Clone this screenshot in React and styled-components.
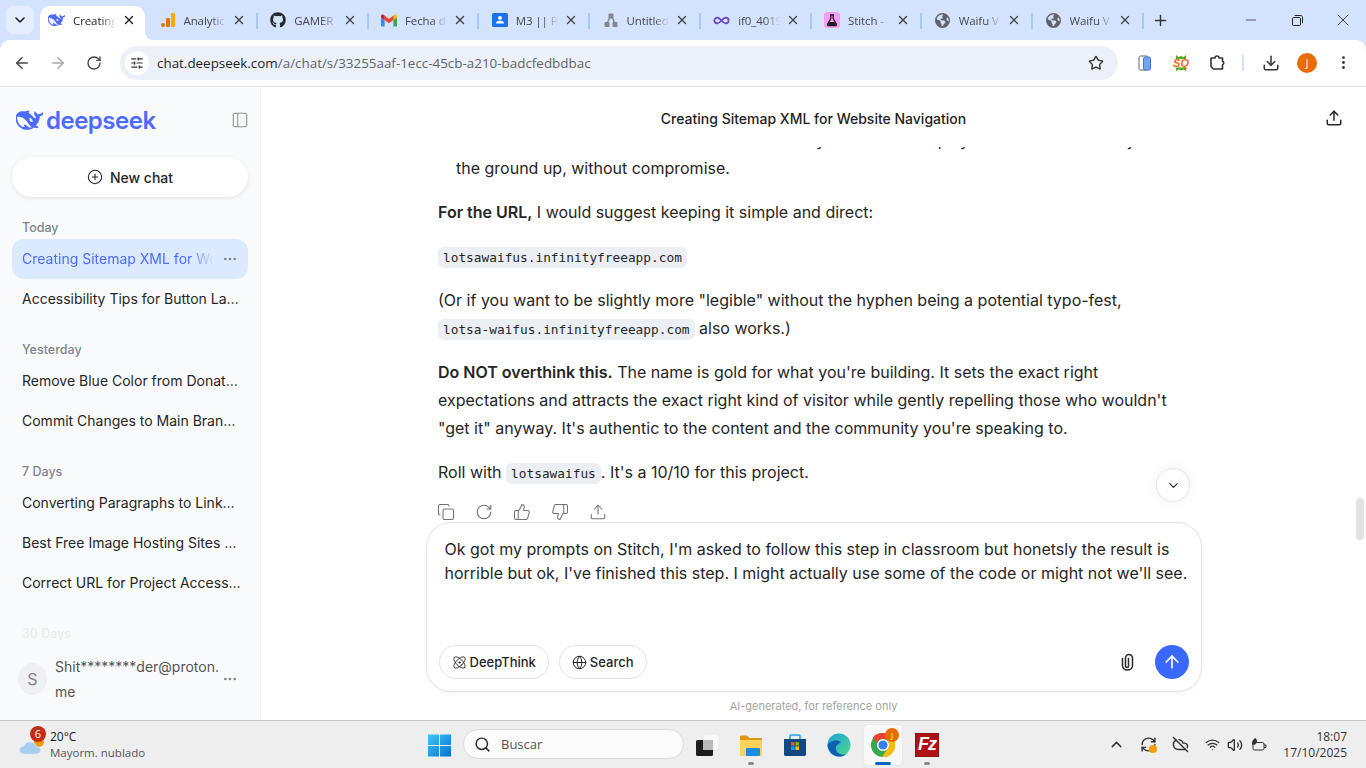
import React from 'react'
import styled, { createGlobalStyle } from 'styled-components'
import {
  ArrowLeft, ArrowRight, ArrowUp, ChevronDown, ChevronUp, Copy, Download, Ellipsis, EllipsisVertical,
  Globe, Infinity as InfinityIcon, Plus, RefreshCw, RotateCw, Search as SearchIcon,
  SlidersHorizontal, Star, ThumbsDown, ThumbsUp, Upload, Volume2, Wifi, X, Minus, Atom, CirclePlus, PanelLeft, CloudOff
} from 'lucide-react'
import { FaGithub } from 'react-icons/fa'
import { FaEarthAmericas } from 'react-icons/fa6'

const GlobalStyle = createGlobalStyle`
  html, body { margin: 0; padding: 0; height: 100%; overflow: hidden; }
  body { font-family: 'Inter', 'Liberation Sans', sans-serif; background: #fff; }
  * { box-sizing: border-box; }
`

const Screen = styled.div`
  background: #d3e3fd;
  display: flex;
  flex-direction: column;
  height: 768px;
  width: 1366px;
  overflow: hidden;
`

/* browser tabs */
const TabStrip = styled.div`
  align-items: flex-end;
  display: flex;
  flex: 0 0 40px;
  padding-left: 6px;
`

const TabMenu = styled.div`
  align-items: center;
  align-self: flex-start;
  background: #e4edfc;
  border-radius: 8px;
  color: #1f1f1f;
  display: flex;
  height: 28px;
  justify-content: center;
  margin: 6px 6px 0 0;
  width: 28px;
`

const Tab = styled.div`
  align-items: center;
  color: #454746;
  display: flex;
  font-family: 'Open Sans', 'Liberation Sans', sans-serif;
  font-size: 11.5px;
  height: 34px;
  letter-spacing: -0.1px;
  padding: 0 12px 6px 12.5px;
  position: relative;
  width: 110.75px;
  &:after {
    background: #a8c7fa;
    content: '';
    height: 16px;
    position: absolute;
    right: 0;
    top: 7px;
    width: 2px;
  }
`

const ActiveTab = styled(Tab)`
  background: #fff;
  border-radius: 10px 10px 0 0;
  color: #1f1f1f;
  margin-right: 2px;
  padding: 0 9px 6px 8px;
  width: 105px;
  &:after {
    background: transparent;
    border-bottom-left-radius: 8px;
    bottom: 0;
    box-shadow: -3px 3px 0 3px #fff;
    height: 8px;
    right: -8px;
    top: auto;
    width: 8px;
  }
`

const TabIcon = styled.span`
  align-items: center;
  display: flex;
  flex: 0 0 16px;
  height: 16px;
  justify-content: center;
  margin-right: 8px;
`

const TabTitle = styled.span`
  flex: 1;
  margin-right: 6px;
  mask-image: linear-gradient(to right, #000 65%, transparent 100%);
  min-width: 0;
  overflow: hidden;
  white-space: nowrap;
`

const NewTab = styled.div`
  align-items: center;
  align-self: flex-start;
  color: #333;
  display: flex;
  height: 28px;
  justify-content: center;
  margin: 6px 0 0 3px;
  width: 28px;
`

const WindowControls = styled.div`
  align-self: flex-start;
  display: flex;
  height: 40px;
  margin-left: auto;
`

const WindowButton = styled.div`
  align-items: center;
  color: #222;
  display: flex;
  justify-content: center;
  width: 46px;
`

/* address bar */
const Toolbar = styled.div`
  align-items: center;
  background: #fff;
  border-bottom: 1px solid #e3e3e3;
  border-radius: 10px 10px 0 0;
  display: flex;
  flex: 0 0 47px;
  padding: 0 0 1px 6px;
`

const NavButton = styled.div`
  align-items: center;
  color: ${({ $dim }) => ($dim ? '#a8a8a8' : '#474747')};
  display: flex;
  height: 32px;
  justify-content: center;
  margin-right: 4px;
  width: 32px;
`

const Omnibox = styled.div`
  align-items: center;
  background: #ecf1f9;
  border-radius: 17px;
  color: #1f1f1f;
  display: flex;
  font-family: 'Open Sans', 'Liberation Sans', sans-serif;
  font-size: 13.42px;
  height: 34px;
  margin: 0 11px 0 6px;
  padding: 0 14px 0 5px;
  width: 998px;
`

const SiteInfo = styled.div`
  align-items: center;
  background: #fff;
  border-radius: 50%;
  color: #333;
  display: flex;
  height: 24px;
  justify-content: center;
  margin-right: 8px;
  width: 24px;
`

const UrlHost = styled.span`
  flex: 1;
  span { color: #5f6368; }
`

const ToolIcon = styled.div`
  align-items: center;
  color: #333;
  display: flex;
  height: 28px;
  justify-content: center;
  margin-left: ${({ $gap }) => $gap || 0}px;
  width: 28px;
`

const ToolDivider = styled.div`
  background: #d3e3fd;
  height: 16px;
  margin: 0 13px 0 11px;
  width: 2px;
`

const Avatar = styled.div`
  align-items: center;
  background: #ea6c00;
  border-radius: 50%;
  color: #fff;
  display: flex;
  font-family: 'Open Sans', sans-serif;
  font-size: 10px;
  height: 20px;
  justify-content: center;
  margin-left: 12px;
  width: 20px;
`

/* page */
const Page = styled.div`
  background: #fff;
  display: flex;
  flex: 1;
  min-height: 0;
`

const Sidebar = styled.aside`
  background: #f9fafb;
  border-right: 1px solid #eef0f3;
  display: flex;
  flex-direction: column;
  flex-shrink: 0;
  padding: 0 12px;
  position: relative;
  width: 261px;
`

const LogoRow = styled.div`
  align-items: center;
  display: flex;
  height: 70px;
  justify-content: space-between;
  padding: 0 0 4px 4px;
`

const Logo = styled.div`
  align-items: center;
  color: #4d6bfe;
  display: flex;
  font-family: 'Inter', sans-serif;
  font-size: 24px;
  font-weight: 600;
  letter-spacing: -0.5px;
  gap: 3px;
`

const CollapseButton = styled.div`
  color: #8a8f98;
  display: flex;
  margin-right: -1px;
`

const NewChatButton = styled.div`
  align-items: center;
  background: #fff;
  border-radius: 20px;
  box-shadow: 0 1px 4px rgba(0, 0, 0, 0.1);
  color: #262626;
  display: flex;
  flex-shrink: 0;
  font-size: 14px;
  font-weight: 500;
  gap: 7px;
  height: 40px;
  justify-content: center;
`

const DayLabel = styled.div`
  color: #7f8590;
  flex-shrink: 0;
  font-size: 12.5px;
  font-weight: 500;
  height: 20px;
  line-height: 18px;
  margin-top: 22px;
  padding-left: 10px;
`

const ChatItem = styled.div`
  align-items: center;
  background: ${({ $active }) => ($active ? '#dbeafe' : 'transparent')};
  border-radius: 12px;
  color: ${({ $active }) => ($active ? '#4d6bfe' : '#262626')};
  display: flex;
  flex-shrink: 0;
  font-size: 14px;
  height: 40px;
  padding: 0 ${({ $active }) => ($active ? 10 : 7)}px 1px 10px;
`

const ChatTitle = styled.span`
  flex: 1;
  min-width: 0;
  overflow: hidden;
  white-space: nowrap;
  ${({ $fade }) => $fade
    ? 'mask-image: linear-gradient(to right, #000 86%, transparent 100%);'
    : 'text-overflow: ellipsis;'}
`

const ItemDots = styled.span`
  color: #7f8590;
  display: flex;
  margin-left: 8px;
`

const FadedLabel = styled(DayLabel)`
  opacity: 0.12;
`

const SidebarFooter = styled.div`
  align-items: center;
  background: #f9fafb;
  bottom: 0;
  display: flex;
  height: 80px;
  left: 0;
  padding: 0 22px 2px 18px;
  position: absolute;
  right: 0;
`

const UserCircle = styled.div`
  align-items: center;
  background: #eef0f2;
  border-radius: 50%;
  color: #81858c;
  display: flex;
  flex: 0 0 29px;
  font-size: 16px;
  height: 32px;
  justify-content: center;
  margin-right: 8px;
`

const UserMail = styled.div`
  color: #555;
  flex: 1;
  font-size: 14px;
  line-height: 25px;
  min-width: 0;
`

/* conversation */
const Main = styled.main`
  display: flex;
  flex: 1;
  flex-direction: column;
  min-width: 0;
  position: relative;
`

const ChatHeader = styled.header`
  align-items: center;
  background: #fff;
  color: #1f1f1f;
  display: flex;
  flex: 0 0 60px;
  font-size: 14px;
  font-weight: 500;
  justify-content: center;
  padding-top: 2px;
  position: relative;
  z-index: 1;
`

const HeaderShare = styled.div`
  color: #262626;
  display: flex;
  position: absolute;
  right: 23px;
  top: 22px;
`

const Messages = styled.div`
  color: #262626;
  flex: 1;
  font-size: 16px;
  line-height: 28px;
  margin: -21px 0 0;
  min-height: 0;
  overflow: hidden;
  padding: 0 178px 0 177px;
  strong { font-weight: 600; }
`

const ListLine = styled.div`
  padding-left: 18px;
  white-space: nowrap;
`

const Para = styled.p`
  margin: 16px 0 0;
  white-space: nowrap;
`

const Code = styled.code`
  background: #ebeef2;
  border-radius: 6px;
  color: #262626;
  font-family: 'DejaVu Sans Mono', 'Liberation Mono', monospace;
  font-size: 12.8px;
  line-height: 20px;
  padding: 3px 5px;
`

const Actions = styled.div`
  color: #6f7177;
  display: flex;
  gap: 20px;
  margin: 17px 0 0 -1px;
`

const Composer = styled.div`
  background: #fff;
  border-radius: 24px;
  box-shadow: 0 0 0 1px #e5e5e5, 0 2px 6px rgba(0, 0, 0, 0.05);
  display: flex;
  flex: 0 0 168px;
  flex-direction: column;
  margin: 0 auto;
  padding: 14px 12px 12px 18px;
  position: relative;
  width: 774px;
`

const ComposerText = styled.div`
  color: #262626;
  flex: 1;
  font-size: 16px;
  line-height: 24px;
  white-space: pre;
`

const ComposerBar = styled.div`
  align-items: center;
  display: flex;
  gap: 10px;
  margin-left: -6px;
`

const Pill = styled.div`
  align-items: center;
  border: 1px solid #e3e3e3;
  border-radius: 17px;
  color: #262626;
  display: flex;
  font-size: 13px;
  font-weight: 500;
  gap: 3px;
  height: 34px;
  padding: 0 12px;
`

const Clip = styled.div`
  color: #262626;
  display: flex;
  margin-left: auto;
  margin-right: 10px;
`

const SendButton = styled.div`
  align-items: center;
  background: #3b68ff;
  border-radius: 50%;
  color: #fff;
  display: flex;
  height: 34px;
  justify-content: center;
  width: 34px;
`

const Disclaimer = styled.div`
  color: #a3a3a3;
  flex: 0 0 29px;
  font-size: 11px;
  line-height: 30px;
  min-height: 0;
  text-align: center;
`

const ScrollDown = styled.div`
  align-items: center;
  background: #fff;
  border: 1px solid #e5e5e5;
  border-radius: 50%;
  box-shadow: 0 0 14px rgba(0, 0, 0, 0.06);
  color: #333;
  display: flex;
  height: 34px;
  justify-content: center;
  left: 895px;
  position: absolute;
  top: 381px;
  width: 34px;
`

const ScrollThumb = styled.div`
  background: #e3e3e3;
  border-radius: 4px;
  height: 42px;
  position: absolute;
  right: 2px;
  top: 411px;
  width: 8px;
`

/* windows taskbar */
const Taskbar = styled.footer`
  align-items: center;
  background: #eee;
  border-top: 1px solid #c6c6c6;
  color: #1a1a1a;
  display: flex;
  flex: 0 0 48px;
  font-family: 'Open Sans', 'Liberation Sans', sans-serif;
  font-size: 12px;
`

const Weather = styled.div`
  align-items: center;
  display: flex;
  flex: 0 0 428px;
  padding-left: 18px;
  position: relative;
`

const WeatherBadge = styled.div`
  align-items: center;
  background: #c42b1c;
  border-radius: 50%;
  color: #fff;
  display: flex;
  font-size: 11px;
  height: 16px;
  justify-content: center;
  left: 30px;
  position: absolute;
  top: -3px;
  width: 16px;
`

const WeatherText = styled.div`
  line-height: 16px;
  margin-left: 2px;
  small { color: #555; display: block; font-size: 11.5px; }
`

const SearchBox = styled.div`
  align-items: center;
  background: #fbfbfb;
  border: 1px solid #dcdcdc;
  border-radius: 16px;
  color: #555;
  display: flex;
  font-size: 13px;
  gap: 10px;
  height: 30px;
  margin: 0 -2px 1px 12px;
  padding-left: 10px;
  width: 221px;
`

const AppSlot = styled.div`
  align-items: center;
  background: ${({ $active }) => ($active ? '#f8f8f8' : 'transparent')};
  border-radius: 4px;
  display: flex;
  height: 40px;
  justify-content: center;
  margin-left: 6px;
  position: relative;
  width: 38px;
  ${({ $active }) => $active && 'box-shadow: 0 0 0 1px #e9e9e9;'}
`

const AppDot = styled.span`
  background: ${({ $active }) => ($active ? '#0067c0' : '#8a8a8a')};
  border-radius: 2px;
  bottom: 0;
  height: 3px;
  left: 50%;
  margin-left: ${({ $active }) => ($active ? -8 : -3)}px;
  position: absolute;
  width: ${({ $active }) => ($active ? 16 : 6)}px;
`

const Tray = styled.div`
  align-items: center;
  color: #333;
  display: flex;
  margin-left: auto;
`

const TrayIcon = styled.span`
  align-items: center;
  display: flex;
  justify-content: center;
  margin-right: ${({ $gap }) => $gap ?? 8}px;
  position: relative;
`

const TrayDot = styled.span`
  background: #f59c0b;
  border-radius: 50%;
  bottom: 0;
  height: 8px;
  position: absolute;
  right: 0;
  width: 8px;
`

const Clock = styled.div`
  line-height: 16px;
  margin: 0 19px 0 16px;
  text-align: right;
`

const Whale = ({ size = 30, color = '#4d6bfe' }) => (
  <svg width={size} height={size * 0.78} viewBox="0 0 32 25">
    <path
      fill={color}
      d="M31.5 4.2c-.4-.2-.6.2-.9.4-.1.1-.2.2-.3.3-.5.5-1 .8-1.7.8-1 0-1.9.3-2.6 1.1-.2-1-.8-1.6-1.6-2-.4-.2-.9-.4-1.2-.8-.2-.3-.3-.6-.4-.9-.1-.2-.1-.4-.4-.5-.2 0-.3.2-.4.4-.4.7-.5 1.5-.5 2.3 0 1.7.8 3 2.1 4 .2.1.2.3.1.4-.1.4-.2.7-.4 1-.1.2-.2.3-.5.2-1-.4-1.8-1-2.5-1.8-1.2-1.2-2.3-2.5-3.7-3.5-.3-.2-.6-.4-1-.6-1.4-1.4.2-2.5.6-2.7.4-.1.1-.6-1.1-.6-1.2 0-2.3.4-3.7 1-.2.1-.4.1-.7.2-1.3-.2-2.6-.3-4-.1-2.6.3-4.7 1.5-6.2 3.7C-.4 7.6-.8 10.5-.3 13.6c.5 3.2 2.2 5.9 4.8 8 2.7 2.2 5.8 3.2 9.3 3 2.1-.1 4.5-.4 7.2-2.7.7.3 1.4.5 2.5.6.9.1 1.7 0 2.4-.2 1-.2.9-1.1.6-1.3-3-1.4-2.4-.8-3-1.3 1.5-1.8 3.8-3.7 4.7-9.8.1-.5 0-.8 0-1.2 0-.3.1-.4.4-.4.8-.1 1.6-.3 2.3-.7 2.1-1.2 2.9-3 3.1-5.3 0-.3 0-.7-.5-.9z"
    />
    <path
      fill="#f9fafb"
      d="M15.2 21.6c-3.1-2.5-4.7-3.3-5.3-3.3-.6 0-.5.7-.3 1.2.1.4.3.8.6 1.3.1.2 0 .4-.2.5-.9.6-2.5-.2-2.6-.3-1.9-1.1-3.4-2.6-4.5-4.7-1-2-1.6-4.1-1.7-6.3 0-.5.1-.7.6-.8.7-.1 1.4-.1 2.1 0 2.9.4 5.4 1.7 7.4 3.8 1.2 1.2 2.1 2.6 3 4 1 1.5 2.1 2.9 3.4 4.1.5.4.9.7 1.2.9-1.1.1-2.9.2-3.7-.4zM16.9 13.2c.3-.1.6 0 .7.3.1.3-.1.6-.4.7-.3.1-.6-.1-.7-.4-.1-.3.1-.5.4-.6zM20 15c-.4.2-.8.3-1.2.3-.6 0-1.2-.2-1.6-.6-.5-.4-.9-.7-1-1.4-.1-.3 0-.7.1-1 0-.2 0-.4-.2-.5-.1-.1-.3-.1-.5-.2 0 0-.1-.1 0-.2 0-.1.2-.2.3-.3.8-.5 1.7-.3 2.5.7.3.4.4.6.8 1.2.3.4.5.8.7 1.2.1.3 0 .6-.4.8z"
    />
  </svg>
)

const AnalyticsIcon = () => (
  <svg width="16" height="16" viewBox="0 0 16 16">
    <rect x="11" y="1" width="4" height="14" rx="1.2" fill="#f9ab00" />
    <rect x="6" y="6" width="4" height="9" rx="1.2" fill="#e37400" />
    <circle cx="3" cy="13" r="2" fill="#e37400" />
  </svg>
)

const GmailIcon = () => (
  <svg width="16" height="13" viewBox="0 0 16 12">
    <path fill="#4285f4" d="M1 12h2.6V5.5L0 3v7.9C0 11.5.5 12 1 12z" />
    <path fill="#34a853" d="M12.4 12H15c.5 0 1-.5 1-1.1V3l-3.6 2.5z" />
    <path fill="#fbbc04" d="M12.4 1.1v4.4L16 3V1.5c0-1.3-1.5-2-2.5-1.2z" />
    <path fill="#ea4335" d="M3.6 5.5V1.1L8 4.4l4.4-3.3v4.4L8 8.8z" />
    <path fill="#c5221f" d="M0 1.5V3l3.6 2.5V1.1L2.5.3C1.5-.5 0 .2 0 1.5z" />
  </svg>
)

const ClassroomIcon = () => (
  <svg width="16" height="16" viewBox="0 0 16 16">
    <rect width="16" height="14" y="1" rx="1.5" fill="#1a73e8" />
    <circle cx="8" cy="6" r="2" fill="#fff" />
    <path fill="#fff" d="M4 11c0-1.6 2-2.2 4-2.2s4 .6 4 2.2v.6H4z" />
  </svg>
)

const NodesIcon = () => (
  <svg width="16" height="16" viewBox="0 0 16 16" fill="#80868b">
    <rect x="5.5" y="1.5" width="5" height="5" rx="1" />
    <rect x="1.5" y="10" width="5" height="5" rx="1" />
    <rect x="9.5" y="10" width="5" height="5" rx="1" />
    <path d="M6.5 6 4.5 10.5M9.5 6l2 4.5" stroke="#80868b" strokeWidth="1.4" />
  </svg>
)

const StitchIcon = () => (
  <svg width="16" height="16" viewBox="0 0 16 16">
    <rect width="16" height="16" rx="3.5" fill="#f79cf0" />
    <path d="M6 3h4M6.8 3v3.6L3.6 12.4c-.3.6.1 1.1.7 1.1h7.4c.6 0 1-.5.7-1.1L9.2 6.6V3" fill="none" stroke="#1a1a1a" strokeWidth="1.3" />
    <path d="M5.5 10h5l1.5 3.4H4z" fill="#1a1a1a" />
  </svg>
)

const RestoreIcon = () => (
  <svg width="11" height="11" viewBox="0 0 11 11" fill="none" stroke="currentColor">
    <rect x="0.5" y="2.5" width="8" height="8" rx="1.2" />
    <path d="M2.6 .5h6.2c1 0 1.7.7 1.7 1.7v6" />
  </svg>
)

const WalletIcon = () => (
  <svg width="18" height="18" viewBox="0 0 18 18">
    <rect x="3" y="2" width="9" height="14" rx="1.5" fill="#fff" stroke="#5f6b7a" />
    <rect x="7.500" y="3" width="7" height="13" rx="1.5" fill="#6ea6f5" stroke="#3b78e0" />
  </svg>
)

const SqIcon = () => (
  <svg width="18" height="18" viewBox="0 0 18 18">
    <path d="M4 1l2.500 2 2.500-1 2.500 1L14 1v4H4zM4 13h10v4l-2.500-1.600-2.500 1-2.500-1L4 17z" fill="#5aa626" />
    <path d="M1.500 5h15v8.500h-15z" fill="#fff" />
    <text x="9" y="13" fontFamily="Liberation Sans" fontSize="11" fontWeight="700" fontStyle="italic" textAnchor="middle" fill="#f26a12">SQ</text>
  </svg>
)

const PuzzleIcon = () => (
  <svg width="17" height="17" viewBox="0 0 17 17" fill="none" stroke="currentColor" strokeWidth="1.6" strokeLinejoin="round">
    <path d="M2 4h4a2 2 0 0 1 4 0h3.500v3.200a1.900 1.900 0 0 1 0 3.600V15H4.500L2 12.500z" />
  </svg>
)

const PaperclipIcon = () => (
  <svg width="15" height="18" viewBox="0 0 15 18" fill="none" stroke="currentColor" strokeWidth="1.5" strokeLinecap="round">
    <path d="M2.500 5.500V12.500a5 4.500 0 0 0 10 0V5a3.500 3.500 0 0 0-7 0v8a1.500 1.500 0 0 0 3 0V5.500" />
  </svg>
)

const WeatherIcon = () => (
  <svg width="30" height="24" viewBox="0 0 30 24">
    <circle cx="21" cy="9" r="5" fill="#f59c0b" />
    <path d="M7 21c-3.500 0-5.500-1.900-5.500-4 0-2.400 2-3.800 4.300-3.800C7 10.500 9.500 9 12 9c3.300 0 5.700 2 6.200 4.600 2.300 0 4.300 1.400 4.300 3.500 0 2.300-1.800 3.900-4.500 3.900z" fill="#a9cdf1" stroke="#d3e4f6" strokeWidth="0.6" />
  </svg>
)

const WindowsLogo = () => (
  <svg width="23" height="24" viewBox="0 0 24 24">
    <defs>
      <linearGradient id="winTile" x1="0" y1="0" x2="1" y2="1">
        <stop offset="0" stopColor="#3cc8f8" />
        <stop offset="1" stopColor="#0a6fd0" />
      </linearGradient>
    </defs>
    <path fill="url(#winTile)" d="M0 1h11.500v11H0zM12.500 1H24v11H12.500zM0 13h11.500v11H0zM12.500 13H24v11H12.500z" />
  </svg>
)

const TaskViewIcon = () => (
  <svg width="24" height="24" viewBox="0 0 24 24">
    <rect x="8" y="1" width="16" height="16" rx="1.500" fill="#f8f8f8" stroke="#ddd" strokeWidth="0.5" />
    <rect x="1" y="7" width="17" height="16" rx="1.500" fill="#1d1d1d" />
    <rect x="8" y="7" width="10" height="10" fill="#b9b9b9" />
  </svg>
)

const FolderIcon = () => (
  <svg width="24" height="24" viewBox="0 0 24 24">
    <path fill="#d99a16" d="M1 4c0-.8.6-1.400 1.400-1.400h5.400L10.500 5H23v5H1z" />
    <path fill="#fbd35a" d="M1 7h22v15c0 .6-.4 1-1 1H2c-.6 0-1-.4-1-1z" />
    <rect x="7" y="15" width="14" height="8" rx="1" fill="#1c8fdc" />
  </svg>
)

const StoreIcon = () => (
  <svg width="24" height="24" viewBox="0 0 24 24">
    <path d="M7 6V3c0-.6.4-1 1-1h8c.6 0 1 .4 1 1v3" fill="none" stroke="#2aa0e6" strokeWidth="1.600" />
    <path fill="#12477f" d="M1 6h22v15.500c0 .8-.7 1.500-1.500 1.500h-19C1.700 23 1 22.300 1 21.500z" />
    <path fill="#f25022" d="M8 9h3.600v3.600H8z" />
    <path fill="#7fba00" d="M12.400 9H16v3.600h-3.600z" />
    <path fill="#00a4ef" d="M8 13.400h3.600V17H8z" />
    <path fill="#ffb900" d="M12.400 13.400H16V17h-3.600z" />
  </svg>
)

const EdgeIcon = () => (
  <svg width="24" height="24" viewBox="0 0 24 24">
    <defs>
      <linearGradient id="edgeTop" x1="0" y1="0" x2="1" y2="1">
        <stop offset="0" stopColor="#1d9fdc" />
        <stop offset="1" stopColor="#4fdc8c" />
      </linearGradient>
    </defs>
    <circle cx="12" cy="12" r="11.500" fill="url(#edgeTop)" />
    <path fill="#0f5fb0" d="M.5 12C1 18.500 6 23.500 12 23.500c3 0 5.500-1 7.500-2.600-4 1.400-9.500.3-10.500-4.400-.6-3 1.500-6 5-6.500-1.500-2.500-5-3.500-8-2C3 9.300 1 10 .5 12z" />
  </svg>
)

const ChromeIcon = () => (
  <svg width="24" height="24" viewBox="0 0 24 24">
    <circle cx="12" cy="12" r="12" fill="#34a853" />
    <path fill="#ea4335" d="M12 0a12 12 0 0 1 10.400 6H12a6 6 0 0 0-5.800 4.400L2 4.200A12 12 0 0 1 12 0z" />
    <path fill="#fbbc04" d="M22.400 6A12 12 0 0 1 11 24l5.500-8.500A6 6 0 0 0 16.500 8z" />
    <circle cx="12" cy="12" r="6" fill="#fff" />
    <circle cx="12" cy="12" r="4.600" fill="#3b7ded" />
  </svg>
)

const BatteryIcon = () => (
  <svg width="17" height="14" viewBox="0 0 17 14" fill="none" stroke="currentColor">
    <rect x="3" y="4.500" width="11" height="7.500" rx="1.500" />
    <path d="M14 7h2v2.500h-2" />
    <path d="M5.500 0C7 1.500 7.500 3 6.500 5 5.500 7 3 7 2 6.500 1.500 4 3 1 5.500 0z" fill="currentColor" stroke="none" />
  </svg>
)

const ChromeBadge = styled.span`
  align-items: center;
  background: #ea6c00;
  border-radius: 50%;
  color: #fff;
  display: flex;
  font-size: 8px;
  height: 14px;
  justify-content: center;
  position: absolute;
  right: 3px;
  top: 3px;
  width: 14px;
`

const FileZillaMark = styled.span`
  align-items: center;
  background: #b01116;
  border: 1px dotted #7a0a0e;
  color: #fff;
  display: flex;
  font-family: 'Liberation Sans', sans-serif;
  font-size: 18px;
  font-style: italic;
  font-weight: 700;
  height: 24px;
  justify-content: center;
  letter-spacing: -1px;
  width: 24px;
`

const tabs = [
  { title: 'Analytic', icon: <AnalyticsIcon /> },
  { title: 'GAMER', icon: <FaGithub size={16} color="#24292f" /> },
  { title: 'Fecha d', icon: <GmailIcon /> },
  { title: 'M3 || PU', icon: <ClassroomIcon /> },
  { title: 'Untitled', icon: <NodesIcon /> },
  { title: 'if0_4019', icon: <InfinityIcon size={17} color="#6a41c9" strokeWidth={2.4} /> },
  { title: 'Stitch -', icon: <StitchIcon /> },
  { title: 'Waifu V', icon: <FaEarthAmericas size={15} color="#5f6368" /> },
  { title: 'Waifu V', icon: <FaEarthAmericas size={15} color="#5f6368" /> }
]

const groups = [
  { label: 'Yesterday', chats: ['Remove Blue Color from Donation Links', 'Commit Changes to Main Branch Now'] },
  { label: '7 Days', chats: ['Converting Paragraphs to Links in HTML', 'Best Free Image Hosting Sites for Projects', 'Correct URL for Project Access and Sharing'] }
]

const App = () => (
  <Screen>
    <GlobalStyle />
    <TabStrip>
      <TabMenu><ChevronDown size={16} strokeWidth={2.4} /></TabMenu>
      <ActiveTab>
        <TabIcon><Whale size={17} /></TabIcon>
        <TabTitle>Creating</TabTitle>
        <X size={14} strokeWidth={2.4} />
      </ActiveTab>
      {tabs.map(({ title, icon }, i) => (
        <Tab key={i}>
          <TabIcon>{icon}</TabIcon>
          <TabTitle>{title}</TabTitle>
          <X size={14} strokeWidth={2.4} />
        </Tab>
      ))}
      <NewTab><Plus size={17} strokeWidth={2} /></NewTab>
      <WindowControls>
        <WindowButton><Minus size={16} strokeWidth={1.1} /></WindowButton>
        <WindowButton><RestoreIcon /></WindowButton>
        <WindowButton><X size={20} strokeWidth={1} /></WindowButton>
      </WindowControls>
    </TabStrip>

    <Toolbar>
      <NavButton><ArrowLeft size={18} /></NavButton>
      <NavButton $dim><ArrowRight size={18} /></NavButton>
      <NavButton><RotateCw size={16} /></NavButton>
      <Omnibox>
        <SiteInfo><SlidersHorizontal size={14} /></SiteInfo>
        <UrlHost>chat.deepseek.com<span>/a/chat/s/33255aaf-1ecc-45cb-a210-badcfedbdbac</span></UrlHost>
        <Star size={16} color="#333" />
      </Omnibox>
      <ToolIcon $gap={2}><WalletIcon /></ToolIcon>
      <ToolIcon $gap={8}><SqIcon /></ToolIcon>
      <ToolIcon $gap={8}><PuzzleIcon /></ToolIcon>
      <ToolDivider />
      <ToolIcon><Download size={18} /></ToolIcon>
      <Avatar>J</Avatar>
      <ToolIcon $gap={12}><EllipsisVertical size={17} /></ToolIcon>
    </Toolbar>

    <Page>
      <Sidebar>
        <LogoRow>
          <Logo><Whale size={27} />deepseek</Logo>
          <CollapseButton><PanelLeft size={18} strokeWidth={1.4} /></CollapseButton>
        </LogoRow>
        <NewChatButton><CirclePlus size={16} strokeWidth={1.6} />New chat</NewChatButton>
        <DayLabel>Today</DayLabel>
        <ChatItem $active>
          <ChatTitle $fade>Creating Sitemap XML for Website Navigation</ChatTitle>
          <ItemDots><Ellipsis size={16} /></ItemDots>
        </ChatItem>
        <ChatItem><ChatTitle>Accessibility Tips for Button Labels</ChatTitle></ChatItem>
        {groups.map(({ label, chats }) => (
          <React.Fragment key={label}>
            <DayLabel>{label}</DayLabel>
            {chats.map(chat => <ChatItem key={chat}><ChatTitle>{chat}</ChatTitle></ChatItem>)}
          </React.Fragment>
        ))}
        <FadedLabel>30 Days</FadedLabel>
        <SidebarFooter>
          <UserCircle>S</UserCircle>
          <UserMail>Shit********der@proton.<br />me</UserMail>
          <ItemDots><Ellipsis size={16} /></ItemDots>
        </SidebarFooter>
      </Sidebar>

      <Main>
        <ChatHeader>
          Creating Sitemap XML for Website Navigation
          <HeaderShare><Upload size={18} /></HeaderShare>
        </ChatHeader>
        <Messages>
          <ListLine>The name tells fans that this site was also clearly made for a display of love that is entirely from</ListLine>
          <ListLine>the ground up, without compromise.</ListLine>
          <Para><strong>For the URL,</strong> I would suggest keeping it simple and direct:</Para>
          <Para><Code>lotsawaifus.infinityfreeapp.com</Code></Para>
          <Para>(Or if you want to be slightly more "legible" without the hyphen being a potential typo-fest,<br />
            <Code>lotsa-waifus.infinityfreeapp.com</Code> also works.)</Para>
          <Para><strong>Do NOT overthink this.</strong> The name is gold for what you're building. It sets the exact right<br />
            expectations and attracts the exact right kind of visitor while gently repelling those who wouldn't<br />
            "get it" anyway. It's authentic to the content and the community you're speaking to.</Para>
          <Para>Roll with <Code>lotsawaifus</Code>. It's a 10/10 for this project.</Para>
          <Actions>
            <Copy size={18} strokeWidth={1.4} />
            <RotateCw size={18} strokeWidth={1.4} />
            <ThumbsUp size={18} strokeWidth={1.4} />
            <ThumbsDown size={18} strokeWidth={1.4} />
            <Upload size={18} strokeWidth={1.4} />
          </Actions>
        </Messages>
        <Composer>
          <ComposerText>{`Ok got my prompts on Stitch, I'm asked to follow this step in classroom but honetsly the result is
horrible but ok, I've finished this step. I might actually use some of the code or might not we'll see.`}</ComposerText>
          <ComposerBar>
            <Pill><Atom size={15} strokeWidth={1.6} />DeepThink</Pill>
            <Pill><Globe size={15} strokeWidth={1.6} />Search</Pill>
            <Clip><PaperclipIcon /></Clip>
            <SendButton><ArrowUp size={20} /></SendButton>
          </ComposerBar>
        </Composer>
        <Disclaimer>AI-generated, for reference only</Disclaimer>
        <ScrollDown><ChevronDown size={15} /></ScrollDown>
        <ScrollThumb />
      </Main>
    </Page>

    <Taskbar>
      <Weather>
        <WeatherIcon />
        <WeatherBadge>6</WeatherBadge>
        <WeatherText>20°C<small>Mayorm. nublado</small></WeatherText>
      </Weather>
      <WindowsLogo />
      <SearchBox><SearchIcon size={17} color="#222" />Buscar</SearchBox>
      <AppSlot><TaskViewIcon /></AppSlot>
      <AppSlot><FolderIcon /><AppDot /></AppSlot>
      <AppSlot><StoreIcon /></AppSlot>
      <AppSlot><EdgeIcon /></AppSlot>
      <AppSlot $active><ChromeIcon /><ChromeBadge>J</ChromeBadge><AppDot $active /></AppSlot>
      <AppSlot><FileZillaMark>Fz</FileZillaMark><AppDot /></AppSlot>
      <Tray>
        <TrayIcon $gap={15}><ChevronUp size={17} /></TrayIcon>
        <TrayIcon $gap={15}><RefreshCw size={17} /><TrayDot /></TrayIcon>
        <TrayIcon $gap={16}><CloudOff size={17} /></TrayIcon>
        <TrayIcon $gap={7}><Wifi size={15} /></TrayIcon>
        <TrayIcon $gap={7}><Volume2 size={16} /></TrayIcon>
        <TrayIcon $gap={0}><BatteryIcon /></TrayIcon>
        <Clock>18:07<br />17/10/2025</Clock>
      </Tray>
    </Taskbar>
  </Screen>
)

export default App
